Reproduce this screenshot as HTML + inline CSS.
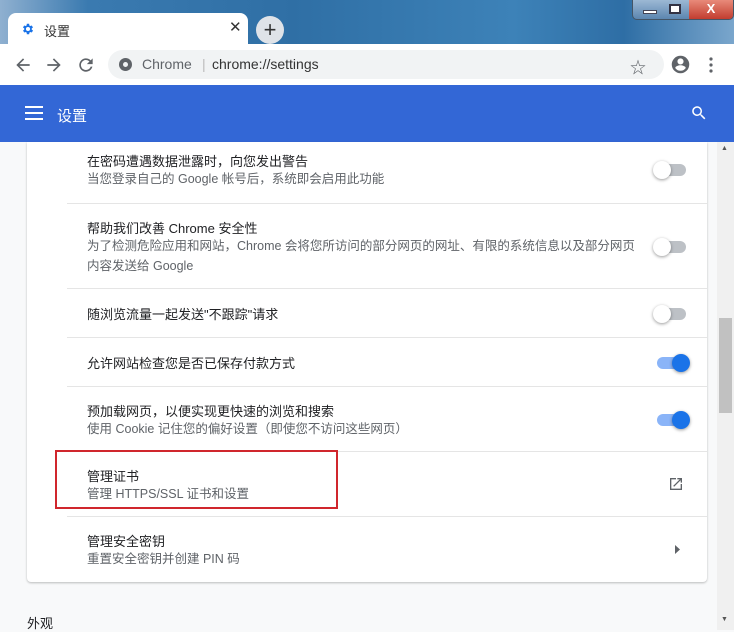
<!DOCTYPE html>
<html><head><meta charset="utf-8"><style>
*{margin:0;padding:0;box-sizing:border-box}
body{width:734px;height:630px;overflow:hidden;font-family:"Liberation Sans","Noto Sans CJK SC",sans-serif;background:#f8f9fa;position:relative}
.tb{position:absolute;left:0;top:0;width:734px;height:44px;background:linear-gradient(90deg,#8fb0d0 0%,#3a7ab0 12%,#2f6fa5 40%,#3d82b8 70%,#2e6ea5 85%,#7aa6cc 100%)}
.tab{position:absolute;left:8px;top:13px;width:240px;height:31px;background:#fff;border-radius:8px 8px 0 0}
.tab .t{position:absolute;left:36px;top:8px;font-size:13px;color:#333}
.tab .x{position:absolute;left:221px;top:5px;font-size:15px;color:#333}
.plus{position:absolute;left:256px;top:16px;width:28px;height:28px;border-radius:50%;background:#dfe3e8;text-align:center;line-height:27px;font-size:22px;color:#333}
.wc{position:absolute;left:632px;top:0;height:20px;width:102px;border:1px solid #456;border-top:0;border-radius:0 0 5px 5px;background:linear-gradient(#9cb8d4,#5c86b0);overflow:hidden}
.wc .cl{position:absolute;right:0;top:0;width:44px;height:20px;background:linear-gradient(#e88a7a,#c0392b);color:#fff;text-align:center;font-weight:bold;font-size:13px;line-height:18px}
.toolbar{position:absolute;top:44px;left:0;width:734px;height:41px;background:#fff}
.omni{position:absolute;left:108px;top:6px;width:556px;height:29px;border-radius:15px;background:#f1f3f4}
.omni span{position:absolute;top:6px;font-size:14px;color:#5f6368}
.hdr{position:absolute;top:85px;left:0;width:734px;height:57px;background:#3367d6}
.hdr .t{position:absolute;left:57px;top:20px;color:#fff;font-size:15px}
.card{position:absolute;left:27px;top:142px;width:680px;height:440px;background:#fff;box-shadow:0 1px 2px rgba(0,0,0,.25);border-radius:0 0 4px 4px}
.row{position:absolute;left:40px;width:640px;border-top:1px solid #e5e5e5}
.row .a{position:absolute;left:20px;font-size:13px;color:#202124}
.row .b{position:absolute;left:20px;font-size:12.5px;color:#5f6368;line-height:20px}
.tg{position:absolute;left:589px;width:30px;height:12px;border-radius:6px;background:#bdc1c6}
.tg i{position:absolute;left:-3px;top:-3px;width:18px;height:18px;border-radius:50%;background:#fff;box-shadow:0 1px 3px rgba(0,0,0,.4)}
.tg.on{background:#8ab4f8;left:590px}
.tg.on i{left:auto;right:-3px;background:#1a73e8}
.sb{position:absolute;left:717px;top:142px;width:17px;height:488px;background:#f0f0f0}
</style></head><body>
<div class="tb"></div>
<div class="wc"><span style="position:absolute;left:10px;top:10px;width:14px;height:4px;background:#fff;border:1px solid #445"></span><span style="position:absolute;left:36px;top:4px;width:12px;height:10px;border:2px solid #334;background:#fff"></span><div class="cl">X</div></div>
<div class="tab">
<svg style="position:absolute;left:13px;top:9px" width="14" height="14" viewBox="0 0 24 24"><path fill="#1a73e8" d="M19.4 13a7.5 7.5 0 000-2l2.1-1.6-2-3.5-2.5 1a7 7 0 00-1.7-1L15 3h-4l-.4 2.9a7 7 0 00-1.7 1l-2.5-1-2 3.5L6.6 11a7.5 7.5 0 000 2l-2.1 1.6 2 3.5 2.5-1a7 7 0 001.7 1L11 21h4l.4-2.9a7 7 0 001.7-1l2.5 1 2-3.5zM13 15.5a3.5 3.5 0 110-7 3.5 3.5 0 010 7z" transform="translate(-1 0)"/></svg>
<span class="t">设置</span><span class="x">✕</span></div>
<div class="plus">+</div>
<div class="toolbar">
<svg style="position:absolute;left:13px;top:11px" width="20" height="20" viewBox="0 0 24 24"><path fill="#5f6368" d="M20 11H7.8l5.6-5.6L12 4l-8 8 8 8 1.4-1.4L7.8 13H20z"/></svg>
<svg style="position:absolute;left:44px;top:11px" width="20" height="20" viewBox="0 0 24 24"><path fill="#5f6368" d="M4 11h12.2l-5.6-5.6L12 4l8 8-8 8-1.4-1.4 5.6-5.6H4z"/></svg>
<svg style="position:absolute;left:76px;top:11px" width="20" height="20" viewBox="0 0 24 24"><path fill="#5f6368" d="M17.6 6.4A8 8 0 1019.7 14h-2.1a6 6 0 11-1.4-6.2L13 11h7V4z"/></svg>
<div class="omni">
<svg style="position:absolute;left:11px;top:8px" width="13" height="13" viewBox="0 0 12 12"><circle cx="6" cy="6" r="6" fill="#5f6368"/><circle cx="6" cy="6" r="2.3" fill="#f1f3f4"/></svg>
<span style="left:34px">Chrome</span><span style="left:94px;color:#bbb">|</span><span style="left:104px;color:#333">chrome://settings</span>
<span style="left:522px;top:4px;font-size:16px">☆</span></div>
<svg style="position:absolute;left:670px;top:10px" width="21" height="21" viewBox="0 0 24 24"><path fill="#5f6368" d="M12 2a10 10 0 100 20 10 10 0 000-20zm0 3a3.5 3.5 0 110 7 3.5 3.5 0 010-7zm0 14.2a7.2 7.2 0 01-6-3.2c0-2 4-3.1 6-3.1s6 1.1 6 3.1a7.2 7.2 0 01-6 3.2z"/></svg>
<svg style="position:absolute;left:708px;top:13px" width="6" height="16" viewBox="0 0 6 16"><circle cx="3" cy="2" r="1.6" fill="#5f6368"/><circle cx="3" cy="8" r="1.6" fill="#5f6368"/><circle cx="3" cy="14" r="1.6" fill="#5f6368"/></svg>
</div>
<div class="hdr">
<svg style="position:absolute;left:25px;top:21px" width="18" height="14" viewBox="0 0 18 14"><rect y="0" width="18" height="2" fill="#fff"/><rect y="6" width="18" height="2" fill="#fff"/><rect y="12" width="18" height="2" fill="#fff"/></svg>
<span class="t">设置</span>
<svg style="position:absolute;left:690px;top:19px" width="18" height="18" viewBox="0 0 24 24"><path fill="#fff" d="M15.5 14h-.8l-.3-.3A6.5 6.5 0 109.5 16a6.5 6.5 0 004.2-1.6l.3.3v.8l5 5 1.5-1.5zm-6 0a4.5 4.5 0 110-9 4.5 4.5 0 010 9z"/></svg>
</div>
<div class="card">
<div class="row" style="top:-1px;height:62px;border-top:0"><span class="a" style="top:10px">在密码遭遇数据泄露时，向您发出警告</span><span class="b" style="top:28px">当您登录自己的 Google 帐号后，系统即会启用此功能</span><div class="tg" style="top:23px"><i></i></div></div>
<div class="row" style="top:61px;height:85px"><span class="a" style="top:14px">帮助我们改善 Chrome 安全性</span><span class="b" style="top:32px;width:548px">为了检测危险应用和网站，Chrome 会将您所访问的部分网页的网址、有限的系统信息以及部分网页内容发送给 Google</span><div class="tg" style="top:37px"><i></i></div></div>
<div class="row" style="top:146px;height:49px"><span class="a" style="top:15px">随浏览流量一起发送"不跟踪"请求</span><div class="tg" style="top:19px"><i></i></div></div>
<div class="row" style="top:195px;height:49px"><span class="a" style="top:15px">允许网站检查您是否已保存付款方式</span><div class="tg on" style="top:19px"><i></i></div></div>
<div class="row" style="top:244px;height:65px"><span class="a" style="top:14px">预加载网页，以便实现更快速的浏览和搜索</span><span class="b" style="top:32px">使用 Cookie 记住您的偏好设置（即使您不访问这些网页）</span><div class="tg on" style="top:27px"><i></i></div></div>
<div class="row" style="top:309px;height:65px"><span class="a" style="top:14px">管理证书</span><span class="b" style="top:32px">管理 HTTPS/SSL 证书和设置</span>
<svg style="position:absolute;left:601px;top:24px" width="16" height="16" viewBox="0 0 24 24"><path fill="#5f6368" d="M19 19H5V5h7V3H3v18h18v-9h-2zM14 3v2h3.6l-9.8 9.8 1.4 1.4L19 6.4V10h2V3z"/></svg></div>
<div class="row" style="top:374px;height:65px"><span class="a" style="top:14px">管理安全密钥</span><span class="b" style="top:32px">重置安全密钥并创建 PIN 码</span>
<svg style="position:absolute;left:607px;top:28px" width="6" height="9" viewBox="0 0 6 9"><path fill="#5f6368" d="M1 0l5 4.5L1 9z"/></svg></div>
</div>
<div style="position:absolute;left:55px;top:450px;width:283px;height:59px;border:2px solid #d0262d"></div>
<div style="position:absolute;left:27px;top:613px;font-size:13px;color:#202124">外观</div>
<div class="sb"><div style="position:absolute;left:2px;top:176px;width:13px;height:95px;background:#c1c1c1"></div>
<span style="position:absolute;left:4px;top:3px;font-size:7px;color:#555">▲</span><span style="position:absolute;left:4px;top:474px;font-size:7px;color:#555">▼</span></div>
</body></html>
